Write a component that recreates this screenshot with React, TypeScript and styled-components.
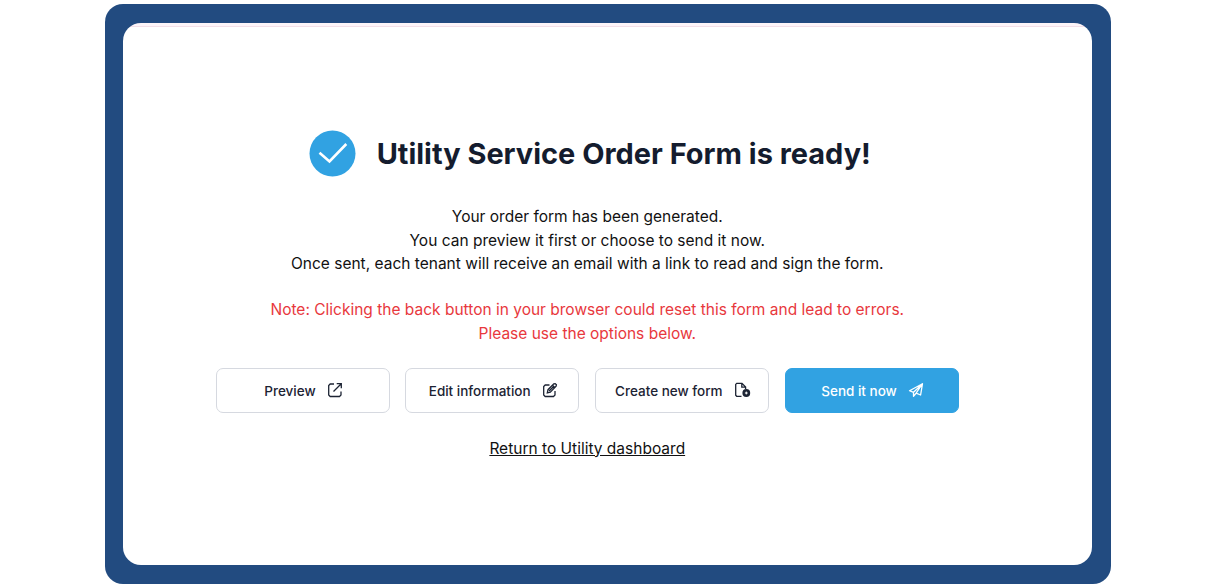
import React from 'react';
import styled, { createGlobalStyle } from 'styled-components';

const GlobalStyle = createGlobalStyle`
  * {
    box-sizing: border-box;
  }

  body {
    margin: 0;
    background-color: #ffffff;
    font-family: 'Inter', sans-serif;
    overflow: hidden;
  }
`;

// Styled components
const Page = styled.div`
  height: 588px;
  padding: 4px 0 0 105px;
`;

const Frame = styled.div`
  width: 1006px;
  height: 580px;
  padding: 19px 19.5px 19px 18px;
  background-color: #224b80;
  border-radius: 18px;
`;

const Card = styled.main`
  display: flex;
  flex-direction: column;
  align-items: center;
  height: 542px;
  padding: 106px 40px 0 0;
  background: linear-gradient(#fdf5f9 0, #fdf5f9 3px, #f3dfe8 3px, #f3dfe8 4px, #ffffff 4px);
  border-radius: 18px;
`;

const Header = styled.div`
  display: flex;
  align-items: center;
  gap: 21px;
  height: 48px;
  margin-left: 5px;
`;

const Title = styled.h1`
  margin: 2px 0 0;
  color: #141c2e;
  font-size: 28.95px;
  font-weight: 700;
  line-height: 48px;
  white-space: nowrap;
`;

const Message = styled.p<{ $warning?: boolean }>`
  margin: ${({ $warning }) => ($warning ? '23.2px' : '28.4px')} 0 0;
  color: ${({ $warning }) => ($warning ? '#e8383d' : '#111111')};
  font-size: 15.5px;
  line-height: 23.25px;
  text-align: center;
  white-space: nowrap;
`;

const Actions = styled.div`
  display: flex;
  gap: 15.7px;
  margin-top: 23.6px;
`;

const ActionButton = styled.button<{ $primary?: boolean }>`
  display: flex;
  align-items: center;
  justify-content: center;
  gap: 11px;
  width: 174px;
  height: 45px;
  padding: 0 0 0 1.5px;
  border: 1px solid ${({ $primary }) => ($primary ? '#31a2e2' : '#d6d9e0')};
  border-radius: 7px;
  background-color: ${({ $primary }) => ($primary ? '#31a2e2' : '#ffffff')};
  color: ${({ $primary }) => ($primary ? '#ffffff' : '#1c2333')};
  font-family: inherit;
  font-size: 13.5px;
  font-weight: 500;
  cursor: pointer;

  svg {
    margin-top: -2px;
  }
`;

const ReturnLink = styled.a`
  margin-top: 23.4px;
  color: #111111;
  font-size: 15.5px;
  line-height: 24px;
  text-decoration: underline;
`;

const CheckIcon = () => (
  <svg width="47" height="47" viewBox="0 0 47 47" fill="none">
    <circle cx="23.5" cy="23.5" r="23" fill="#31a2e2" />
    <path d="M10.5 22.7L20.5 31.5L37.3 14" stroke="#ffffff" strokeWidth="2.6" />
  </svg>
);

const PreviewIcon = () => (
  <svg width="16" height="16" viewBox="0 0 16 16" fill="none" stroke="currentColor" strokeWidth="1.3">
    <path d="M7 2H3.2L1.7 3.5V13L3.2 14.5H12.5L14 13V9.5M9.7 1.7H14.3V6.3M14 2L6.5 9.5" />
  </svg>
);

const EditIcon = () => (
  <svg width="16" height="16" viewBox="0 0 16 16" fill="none" stroke="currentColor" strokeWidth="1.3">
    <path d="M7.5 3H3.2L1.7 4.5V13L3.2 14.5H11.5L13 13V9" />
    <path d="M5.3 10.8L6 7.7L11.8 1.9L13.2 1.6L14.4 2.8L14.1 4.2L8.3 10.1ZM10.5 3.2L12.8 5.5M7.1 9L11.8 4.2" />
  </svg>
);

const NewFormIcon = () => (
  <svg width="17" height="16" viewBox="0 0 17 16" fill="none" stroke="currentColor" strokeWidth="1.3">
    <path d="M7.5 14.3H2.7L1.7 13.3V2.4L2.7 1.4H8L11.6 5V7M7.8 1.5V5.2H11.5" />
    <circle cx="12.3" cy="11" r="3.9" fill="currentColor" stroke="none" />
    <path d="M12.3 9.6V12.4M10.9 11H13.7" stroke="#ffffff" strokeWidth="1" />
  </svg>
);

const SendIcon = () => (
  <svg width="16" height="16" viewBox="0 0 16 16" fill="none" stroke="currentColor" strokeWidth="1.3" strokeLinejoin="round">
    <path d="M1.5 8.7L14.5 1.7L12.6 13L8.1 11.2L5.5 14.2V10.3ZM14.5 1.7L5.5 10.3M14.5 1.7L8.1 11.2" />
  </svg>
);

const App: React.FC = () => {
  return (
    <>
      <GlobalStyle />
      <Page>
        <Frame>
          <Card>
            <Header>
              <CheckIcon />
              <Title>Utility Service Order Form is ready!</Title>
            </Header>
            <Message>
              Your order form has been generated.
              <br />
              You can preview it first or choose to send it now.
              <br />
              Once sent, each tenant will receive an email with a link to read and sign the form.
            </Message>
            <Message $warning>
              Note: Clicking the back button in your browser could reset this form and lead to errors.
              <br />
              Please use the options below.
            </Message>
            <Actions>
              <ActionButton type="button">
                Preview <PreviewIcon />
              </ActionButton>
              <ActionButton type="button">
                Edit information <EditIcon />
              </ActionButton>
              <ActionButton type="button">
                Create new form <NewFormIcon />
              </ActionButton>
              <ActionButton type="button" $primary>
                Send it now <SendIcon />
              </ActionButton>
            </Actions>
            <ReturnLink href="#">Return to Utility dashboard</ReturnLink>
          </Card>
        </Frame>
      </Page>
    </>
  );
};

export default App;
